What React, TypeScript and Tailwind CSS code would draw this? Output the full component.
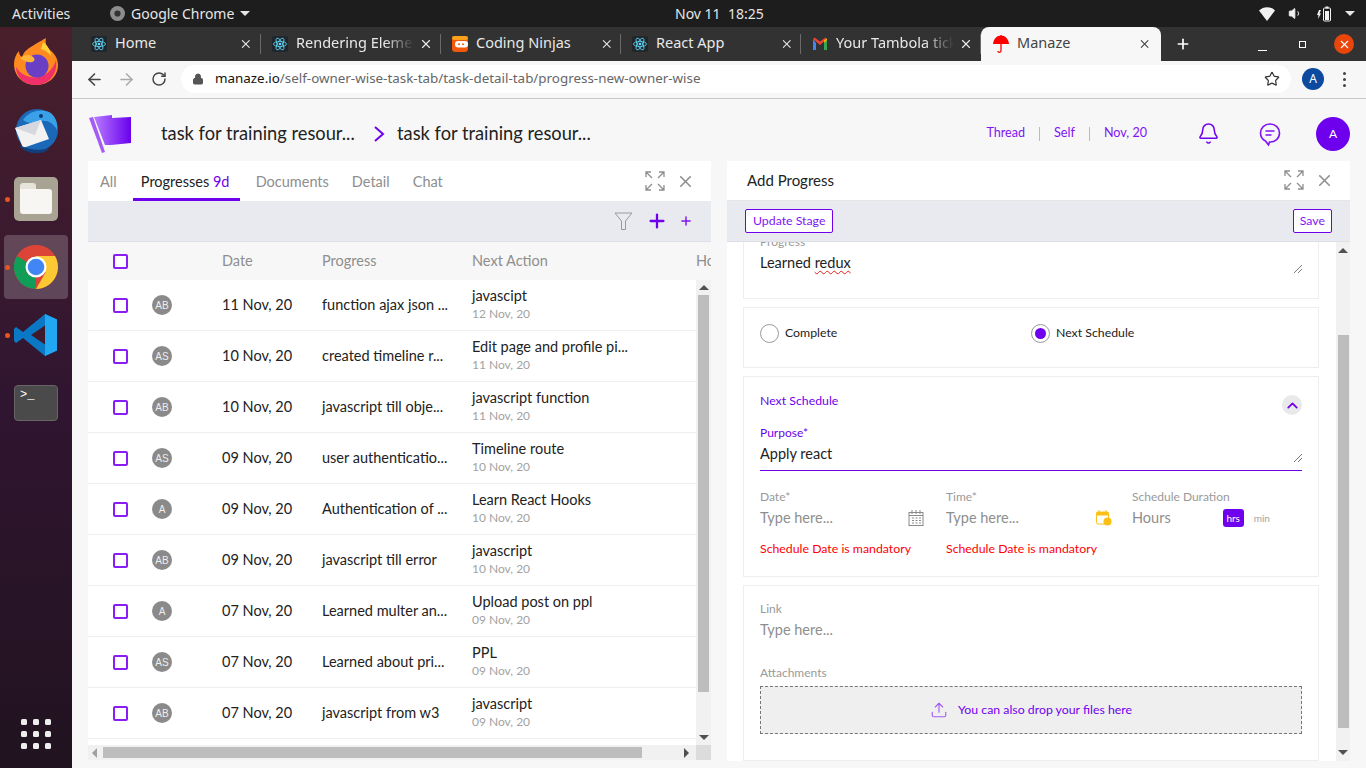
import { ArrowLeft, ArrowRight, Bell, ChevronUp, Lock, Plus, RotateCw, Star, Upload, Volume1, X } from 'lucide-react';

const rows = [
  { who: 'AB', date: '11 Nov, 20', progress: 'function ajax json ...', next: 'javascipt', due: '12 Nov, 20' },
  { who: 'AS', date: '10 Nov, 20', progress: 'created timeline r...', next: 'Edit page and profile pi...', due: '11 Nov, 20' },
  { who: 'AB', date: '10 Nov, 20', progress: 'javascript till obje...', next: 'javascript function', due: '11 Nov, 20' },
  { who: 'AS', date: '09 Nov, 20', progress: 'user authenticatio...', next: 'Timeline route', due: '10 Nov, 20' },
  { who: 'A', date: '09 Nov, 20', progress: 'Authentication of ...', next: 'Learn React Hooks', due: '10 Nov, 20' },
  { who: 'AB', date: '09 Nov, 20', progress: 'javascript till error', next: 'javascript', due: '10 Nov, 20' },
  { who: 'A', date: '07 Nov, 20', progress: 'Learned multer an...', next: 'Upload post on ppl', due: '09 Nov, 20' },
  { who: 'AS', date: '07 Nov, 20', progress: 'Learned about pri...', next: 'PPL', due: '09 Nov, 20' },
  { who: 'AB', date: '07 Nov, 20', progress: 'javascript from w3', next: 'javascript', due: '09 Nov, 20' },
];

function ReactIcon() {
  return (
    <svg width="16" height="16" viewBox="0 0 16 16" className="shrink-0">
      <rect width="16" height="16" rx="2" fill="#20262c" />
      <g fill="none" stroke="#61dafb" strokeWidth="0.8">
        <ellipse cx="8" cy="8" rx="6.5" ry="2.6" />
        <ellipse cx="8" cy="8" rx="6.5" ry="2.6" transform="rotate(60 8 8)" />
        <ellipse cx="8" cy="8" rx="6.5" ry="2.6" transform="rotate(120 8 8)" />
      </g>
      <circle cx="8" cy="8" r="1.3" fill="#61dafb" />
    </svg>
  );
}

function NinjaIcon() {
  return (
    <svg width="16" height="16" viewBox="0 0 16 16" className="shrink-0">
      <rect width="16" height="16" rx="3.5" fill="#f2590f" />
      <rect y="0" width="16" height="4" rx="2" fill="#f9a11b" />
      <rect x="3" y="5" width="13" height="6.5" rx="3" fill="#fff" />
      <circle cx="7" cy="8.2" r="1" fill="#f2590f" />
      <circle cx="11" cy="8.2" r="1" fill="#f2590f" />
    </svg>
  );
}

function GmailIcon() {
  return (
    <svg width="16" height="14" viewBox="0 0 16 14" className="shrink-0">
      <path d="M1 2v11h3V6z" fill="#4285f4" />
      <path d="M15 2v11h-3V6z" fill="#34a853" />
      <path d="M1 2l7 6 7-6-1.5-1.5L8 4.6 2.5.5z" fill="#ea4335" />
      <path d="M12 6l3-3V1.5L12 3.6z" fill="#fbbc04" />
    </svg>
  );
}

function UmbrellaIcon() {
  return (
    <svg width="16" height="20" viewBox="0 0 16 20" className="shrink-0">
      <path d="M0 10C.6 4.5 4 1.5 8 1.5S15.400 4.500 16 10z" fill="#f00" />
      <path d="M8 1v15.500c0 2.500-3 2.500-3 .5" fill="none" stroke="#f00" strokeWidth="1.300" />
    </svg>
  );
}

function Tab({ icon, title, fade, active, wide }: { icon: React.ReactNode; title: string; fade?: boolean; active?: boolean; wide?: boolean }) {
  const pad = wide ? 'w-[189px] pl-[19px]' : active ? 'w-[180px] pl-[12px]' : 'w-[180px] pl-[11px]';
  return (
    <div className={`flex h-full items-center ${pad} ${active ? 'rounded-t-lg bg-[#f7f7f7] text-[#444]' : 'text-[#e8e8e8]'}`}>
      {icon}
      <span className={`ml-[8px] overflow-hidden whitespace-nowrap pb-[2px] text-[14.5px] ${fade ? 'w-[118px] [mask-image:linear-gradient(90deg,#000_75%,transparent)]' : 'w-[128px]'}`}>{title}</span>
      <X size={14} strokeWidth={2} className="ml-auto" />
      {active ? <span className="ml-[9px] w-px" /> : <span className="ml-[7px] h-[20px] w-px bg-[#6a6a6a]" />}
    </div>
  );
}

function TopBar() {
  return (
    <div className="flex h-[27px] items-center bg-[#1d1d1d] pl-[12px] text-[14px] text-[#e6e6e6]">
      <span className="w-[98px]">Activities</span>
      <svg width="15" height="15" viewBox="0 0 16 16">
        <circle cx="8" cy="8" r="8" fill="#8d8d8d" />
        <circle cx="8" cy="8" r="3.300" fill="#333" />
      </svg>
      <span className="ml-[6px] w-[109px]">Google Chrome</span>
      <span className="h-0 w-0 border-x-[5px] border-t-[5px] border-x-transparent border-t-[#e6e6e6]" />
      <span className="ml-[425px] w-[92px] whitespace-pre">Nov 11  18:25</span>
      <div className="ml-auto flex items-center gap-[13px] pr-[11px]">
        <svg width="16" height="14" viewBox="0 0 16 14"><path d="M0 3.500C4.500-1 11.500-1 16 3.500L8 14z" fill="#f2f2f2" /></svg>
        <Volume1 size={15} fill="#f2f2f2" strokeWidth={1.500} />
        <svg width="16" height="16" viewBox="0 0 16 16">
          <rect x="7.500" y="2" width="7" height="13" rx="1" fill="none" stroke="#f2f2f2" />
          <rect x="9.500" y="0.500" width="3" height="2" fill="#f2f2f2" />
          <rect x="9" y="5" width="4" height="9" fill="#f2f2f2" />
          <path d="M3 4L1 9h1.500L2 13l3-5.500H3.500L5 4z" fill="#f2f2f2" />
        </svg>
        <span className="h-0 w-0 border-x-[5px] border-t-[5px] border-x-transparent border-t-[#e6e6e6]" />
      </div>
    </div>
  );
}

function Dock() {
  return (
    <div className="flex h-full w-[72px] shrink-0 flex-col items-center bg-gradient-to-b from-[#4a1f2c] via-[#301530] to-[#211320] pt-[11px]">
      <svg width="46" height="48" viewBox="0 0 46 48">
        <path d="M23 47C10 47 1 38 1 26c0-5 2-10 5-13 0 3 1 5 3 6 2-6 7-9 12-12 7-4 10-6 12-7-1 4 0 8 4 12 5 4 8 9 8 15 0 11-9 20-22 20z" fill="#ff8a1f" />
        <path d="M23 47C11 47 3 39 3 29c6 10 20 14 30 7 6-4 9-10 10-14 2 14-7 25-20 25z" fill="#f0306a" />
        <circle cx="24" cy="28" r="11.500" fill="#6a3fc4" />
        <path d="M7 20c5-4 11-4 14 0 2 3-2 5-6 4-3-1-6-2-8-4z" fill="#ffb53a" />
        <path d="M30 4c5 4 8 9 8 14-3-4-6-6-10-7z" fill="#ffd23a" />
      </svg>
      <svg width="46" height="48" viewBox="0 0 46 48" className="mt-[21px]">
        <circle cx="24" cy="23" r="21" fill="#1b68b8" />
        <path d="M10 13C15 5 26 1 36 5c6 3 9 10 8 18-4-8-12-11-20-8-6 2-10 1-14-2z" fill="#3aa0e8" />
        <circle cx="28" cy="9" r="2" fill="#0d3c78" />
        <path d="M2 21l26-8 8 19-26 9z" fill="#f2f2f2" />
        <path d="M2 21l20 7 6-15z" fill="#d7d7e0" />
        <path d="M6 38c4 6 12 9 20 8 4 0 8-2 11-5-9 3-21 2-31-3z" fill="#123f7c" />
      </svg>
      <div className="relative mt-[22px] h-[44px] w-[44px] rounded-[5px] bg-[#a8a392] p-[6px]">
        <span className="absolute left-[-9px] top-[20px] h-[5px] w-[5px] rounded-full bg-[#e95420]" />
        <div className="h-[6px] w-[16px] rounded-t-[3px] bg-[#e6e3d8]" />
        <div className="h-[25px] rounded-b-[3px] rounded-tr-[3px] bg-[#f7f6f2]" />
      </div>
      <div className="relative mt-[14px] flex h-[64px] w-[64px] items-center justify-center rounded-[4px] bg-white/20">
        <span className="absolute left-[1px] top-[30px] h-[5px] w-[5px] rounded-full bg-[#e95420]" />
        <svg width="44" height="44" viewBox="0 0 44 44">
          <circle cx="22" cy="22" r="22" fill="#db4437" />
          <path d="M22 22L3 33A22 22 0 0 0 22 44z" fill="#0f9d58" />
          <path d="M3 33A22 22 0 0 1 3 11L22 22z" fill="#0f9d58" />
          <path d="M22 22L3 11A22 22 0 0 1 22 0h0A22 22 0 0 1 41 11z" fill="#db4437" />
          <path d="M22 11H41A22 22 0 0 1 22 44L31.500 27.500z" fill="#fcc934" />
          <circle cx="22" cy="22" r="10.500" fill="#fff" />
          <circle cx="22" cy="22" r="8.300" fill="#4285f4" />
        </svg>
      </div>
      <div className="relative mt-[15px] h-[42px] w-[44px]">
        <span className="absolute left-[-9px] top-[19px] h-[5px] w-[5px] rounded-full bg-[#e95420]" />
        <svg width="44" height="42" viewBox="0 0 44 42">
          <path d="M31 0l12 5.500v31L31 42 9 24 2 29l-2-2v-12l2-2 7 5z" fill="#0a78c4" />
          <path d="M31 0l12 5.500v31L31 42z" fill="#22a7f2" />
          <path d="M31 11.500L17 21l14 9.500z" fill="#3f1a2c" />
        </svg>
      </div>
      <div className="mt-[29px] h-[36px] w-[44px] rounded-[4px] border border-[#666] bg-[#4a4a4a] pl-[5px] font-['Liberation_Mono',monospace] text-[12px] leading-[18px] text-white">
        &gt;_
      </div>
      <div className="mb-[19px] mt-auto grid grid-cols-3 gap-[6px]">
        {Array.from({ length: 9 }).map((_, i) => (
          <span key={i} className="h-[6px] w-[6px] rounded-[1.500px] bg-[#eee]" />
        ))}
      </div>
    </div>
  );
}

function Chrome() {
  return (
    <div className="font-['Noto_Sans',sans-serif]">
      <div className="flex h-[34px] items-end bg-[#333232]">
        <Tab icon={<ReactIcon />} title="Home" wide />
        <Tab icon={<ReactIcon />} title="Rendering Elements" fade />
        <Tab icon={<NinjaIcon />} title="Coding Ninjas" />
        <Tab icon={<ReactIcon />} title="React App" />
        <Tab icon={<GmailIcon />} title="Your Tambola tickets" fade />
        <Tab icon={<UmbrellaIcon />} title="Manaze" active />
        <Plus size={16} strokeWidth={2.500} className="mb-[9px] ml-[14px] text-white" />
        <span className="mb-[10px] ml-[67px] h-[1px] w-[9px] bg-white" />
        <span className="mb-[13px] ml-[32px] h-[7px] w-[7px] border border-white" />
        <span className="mb-[7px] ml-[28px] flex h-[20px] w-[20px] items-center justify-center rounded-full bg-[#e9460c] text-white">
          <X size={13} strokeWidth={2} />
        </span>
      </div>
      <div className="flex h-[38px] items-center border-b border-[#c9c9c9] bg-[#f7f7f7] pb-[1px]">
        <ArrowLeft size={19} strokeWidth={2} className="ml-[13px] text-[#444]" />
        <ArrowRight size={19} strokeWidth={2} className="ml-[13px] text-[#aaa]" />
        <RotateCw size={16} strokeWidth={2.200} className="ml-[15px] text-[#444]" />
        <div className="ml-[14px] flex h-[28px] w-[1110px] items-center rounded-full bg-white pl-[11px] pr-[11px] text-[13.4px]">
          <Lock size={12} fill="#555" strokeWidth={2} className="text-[#555]" />
          <span className="ml-[11px] pb-[1px] text-[#111]">manaze.io</span>
          <span className="pb-[1px] text-[#666]">/self-owner-wise-task-tab/task-detail-tab/progress-new-owner-wise</span>
          <Star size={16} strokeWidth={1.800} className="ml-auto text-[#333]" />
        </div>
        <span className="ml-[11px] flex h-[22px] w-[22px] items-center justify-center rounded-full bg-[#0b4a9e] text-[12px] text-white">A</span>
        <div className="ml-[19px] flex flex-col gap-[3px]">
          <span className="h-[3px] w-[3px] rounded-full bg-[#444]" />
          <span className="h-[3px] w-[3px] rounded-full bg-[#444]" />
          <span className="h-[3px] w-[3px] rounded-full bg-[#444]" />
        </div>
      </div>
    </div>
  );
}

function Expand() {
  return (
    <svg width="20" height="20" viewBox="0 0 20 20" fill="none" stroke="#8f8f8f" strokeWidth="1.300">
      <path d="M1 6V1h5M1 1l6 6M14 1h5v5M19 1l-6 6M1 14v5h5M1 19l6-6M14 19h5v-5M19 19l-6-6" />
    </svg>
  );
}

function CheckBox() {
  return <span className="block h-[15px] w-[15px] rounded-[2px] border-2 border-[#8a1cf5] bg-white" />;
}

function UpArrow() {
  return <span className="block h-0 w-0 shrink-0 border-x-[5px] border-b-[5px] border-x-transparent border-b-[#505050]" />;
}

function DownArrow({ className }: { className: string }) {
  return <span className={`block h-0 w-0 shrink-0 border-x-[5px] border-t-[5px] border-x-transparent border-t-[#505050] ${className}`} />;
}

function ProgressList() {
  return (
    <section className="flex w-[623px] shrink-0 flex-col overflow-hidden">
      <div className="flex h-[40px] items-stretch bg-white text-[14.5px] text-[#8e8e8e]">
        <span className="ml-[12px] flex items-center pt-[2px]">All</span>
        <span className="ml-[16px] flex w-[107px] items-center justify-center border-b-[3px] border-[#6f00ee] pr-[2px] pt-[5px] text-[#222]">
          Progresses&nbsp;<span className="text-[#6f00ee]">9d</span>
        </span>
        <span className="ml-[16px] flex items-center pt-[2px]">Documents</span>
        <span className="ml-[23px] flex items-center pt-[2px]">Detail</span>
        <span className="ml-[23px] flex items-center pt-[2px]">Chat</span>
        <div className="ml-auto flex items-center gap-[11px] pr-[16px]">
          <Expand />
          <X size={19} strokeWidth={2} />
        </div>
      </div>
      <div className="flex h-[41px] items-center justify-end border-b border-[#dcdfe5] bg-[#e8eaef] pr-[18px]">
        <svg width="19" height="19" viewBox="0 0 19 19" fill="none" stroke="#9a9a9a" strokeWidth="1">
          <path d="M1 1h17l-6.500 8v8.500h-4V9z" />
        </svg>
        <Plus size={22} strokeWidth={2.500} className="ml-[13px] text-[#6f00ee]" />
        <Plus size={14} strokeWidth={2.500} className="ml-[11px] text-[#7c14f5]" />
      </div>
      <div className="flex h-[38px] shrink-0 items-center whitespace-nowrap bg-[#f7f7f7] text-[14.5px] text-[#8e8e8e]">
        <div className="w-[64px] shrink-0 pl-[25px]"><CheckBox /></div>
        <div className="w-[70px] shrink-0" />
        <div className="w-[100px] shrink-0">Date</div>
        <div className="w-[150px] shrink-0">Progress</div>
        <div className="w-[224px] shrink-0">Next Action</div>
        <div className="shrink-0">Hours</div>
      </div>
      <div className="flex h-[465px]">
        <div className="w-[608px] bg-white">
          {rows.map((r, i) => (
            <div key={i} className="flex h-[51px] items-center border-b border-[#eeeeee] text-[14.5px] text-[#222]">
              <div className="w-[64px] pl-[25px]"><CheckBox /></div>
              <div className="w-[70px]">
                <span className="flex h-[20px] w-[20px] items-center justify-center rounded-full bg-[#8a8a8a] font-['Liberation_Sans',sans-serif] text-[10px] text-[#eee]">{r.who}</span>
              </div>
              <div className="w-[100px] pb-[1px]">{r.date}</div>
              <div className="w-[150px] whitespace-nowrap pb-[1px]">{r.progress}</div>
              <div className="w-[224px] whitespace-nowrap">
                <div className="leading-[18px]">{r.next}</div>
                <div className="text-[12px] leading-[18px] text-[#a2a2a2]">{r.due}</div>
              </div>
            </div>
          ))}
        </div>
        <div className="flex w-[15px] flex-col items-center bg-[#f1f1f1] pt-[5px]">
          <UpArrow />
          <div className="mt-[5px] h-[397px] w-[11px] shrink-0 bg-[#bdbdbd]" />
          <DownArrow className="mt-[43px]" />
        </div>
      </div>
      <div className="flex h-[15px] items-center bg-[#f1f1f1]">
        <span className="ml-[4px] h-0 w-0 border-y-[5px] border-r-[5px] border-y-transparent border-r-[#a0a0a0]" />
        <div className="ml-[6px] h-[11px] w-[539px] bg-[#bdbdbd]" />
        <span className="ml-[42px] h-0 w-0 border-y-[5px] border-l-[5px] border-y-transparent border-l-[#505050]" />
        <div className="ml-auto h-[15px] w-[15px] bg-[#dcdcdc]" />
      </div>
    </section>
  );
}

function Card({ className, children }: { className: string; children: React.ReactNode }) {
  return <div className={`mb-[8px] border border-[#eeeeee] bg-white px-[16px] ${className}`}>{children}</div>;
}

function Grip() {
  return (
    <svg width="8" height="8" viewBox="0 0 8 8" stroke="#555" strokeWidth="0.800" className="ml-auto">
      <path d="M0 8L8 0M4 8L8 4" />
    </svg>
  );
}

function Field({ label, width, children }: { label: string; width: string; children: React.ReactNode }) {
  return (
    <div className={width}>
      <div className="text-[12px] leading-[16px] text-[#9a9a9a]">{label}</div>
      <div className="flex h-[24px] items-center pt-[2px] text-[14.5px] text-[#8e8e8e]">{children}</div>
    </div>
  );
}

function AddProgress() {
  return (
    <section className="ml-[16px] flex w-[623px] shrink-0 flex-col overflow-hidden">
      <div className="flex h-[40px] items-center border-b border-[#e6e6e6] bg-white pb-[1px] pl-[20px] pr-[16px] text-[15px] text-[#222]">
        Add Progress
        <div className="ml-auto flex items-center gap-[11px] text-[#8e8e8e]">
          <Expand />
          <X size={19} strokeWidth={2} />
        </div>
      </div>
      <div className="flex h-[41px] items-center justify-between border-b border-[#dcdfe5] bg-[#e8eaef] pl-[18px] pr-[18px] text-[12.3px] text-[#7f14f5]">
        <span className="rounded-[2px] border border-[#6f00ee] bg-white px-[7px] py-[2px]">Update Stage</span>
        <span className="rounded-[2px] border border-[#6f00ee] bg-white px-[6px] py-[2px]">Save</span>
      </div>
      <div className="flex h-[519px] overflow-hidden bg-white">
        <div className="w-[609px] overflow-hidden pl-[16px] pr-[17px] text-[#222]">
          <Card className="-mt-[7px] h-[64px] border-t-0">
            <div className="text-[12px] leading-[14px] text-[#9a9a9a]">Progress</div>
            <div className="mt-[4px] flex items-end text-[14.5px] leading-[20px]">
              <span>Learned <span className="underline decoration-[#e02020] decoration-wavy decoration-1 underline-offset-2">redux</span></span>
              <span className="mb-0 ml-auto"><Grip /></span>
            </div>
          </Card>
          <Card className="flex h-[61px] items-center pb-[8px] text-[12.3px]">
            <span className="h-[19px] w-[19px] rounded-full border border-[#999]" />
            <span className="ml-[6px] w-[246px]">Complete</span>
            <span className="flex h-[19px] w-[19px] items-center justify-center rounded-full border border-[#999]">
              <span className="h-[11px] w-[11px] rounded-full bg-[#6f00ee]" />
            </span>
            <span className="ml-[6px]">Next Schedule</span>
          </Card>
          <Card className="h-[201px]">
            <div className="flex h-[48px] items-center justify-between pt-[8px] text-[12.3px] text-[#6f00ee]">
              <span className="-mt-[8px]">Next Schedule</span>
              <span className="flex h-[20px] w-[20px] items-center justify-center rounded-full bg-[#e9e9e9]">
                <ChevronUp size={17} strokeWidth={2.500} />
              </span>
            </div>
            <div className="text-[12px] leading-[16px] text-[#6f00ee]">Purpose*</div>
            <div className="flex h-[30px] items-center border-b border-b-[#6f00ee] pb-[3px] text-[14.5px] text-[#222]">
              Apply react
              <span className="ml-auto mt-[8px]"><Grip /></span>
            </div>
            <div className="mt-[18px] flex">
              <Field label="Date*" width="w-[186px]">
                Type here...
                <svg width="16" height="16" viewBox="0 0 16 16" fill="none" stroke="#8a8a8a" className="ml-auto mr-[22px]">
                  <rect x="1" y="2.500" width="14" height="13" />
                  <path d="M4 0v4M8 0v4M12 0v4M1 5.500h14M4 8h2M7.500 8h2M11 8h2M4 10.500h2M7.500 10.500h2M11 10.500h2M4 13h2M7.500 13h2M11 13h2" />
                </svg>
              </Field>
              <Field label="Time*" width="w-[186px]">
                Type here...
                <svg width="16" height="16" viewBox="0 0 16 16" className="ml-auto mr-[20px]">
                  <rect x="0.500" y="2" width="12" height="12" rx="1.500" fill="#fff" stroke="#fcbf15" />
                  <rect x="0.500" y="2" width="12" height="3.500" fill="#fcbf15" />
                  <path d="M3 0v3M10 0v3" stroke="#fcbf15" />
                  <circle cx="11.500" cy="11.500" r="4" fill="#fcbf15" />
                </svg>
              </Field>
              <Field label="Schedule Duration" width="w-[170px]">
                Hours
                <span className="ml-[52px] flex h-[18px] w-[21px] items-center justify-center rounded-[3px] bg-[#6f00ee] text-[10px] text-white">hrs</span>
                <span className="ml-[10px] text-[10px] text-[#a2a2a2]">min</span>
              </Field>
            </div>
            <div className="mt-[12px] flex text-[12.3px] leading-[16px] text-[#f00]">
              <span className="w-[186px]">Schedule Date is mandatory</span>
              <span>Schedule Date is mandatory</span>
            </div>
          </Card>
          <Card className="h-[176px] pt-[15px]">
            <Field label="Link" width="w-full">Type here...</Field>
            <div className="mt-[24px] text-[12px] leading-[16px] text-[#9a9a9a]">Attachments</div>
            <div className="mt-[5px] flex h-[48px] items-center justify-center border border-dashed border-[#777] bg-[#efefef] text-[12.3px] text-[#6f00ee]">
              <Upload size={18} strokeWidth={1.500} className="text-[#a45cf5]" />
              <span className="ml-[10px]">You can also drop your files here</span>
            </div>
          </Card>
        </div>
        <div className="flex w-[14px] flex-col items-center bg-[#f1f1f1] pt-[6px]">
          <UpArrow />
          <div className="mt-[82px] h-[393px] w-[11px] shrink-0 bg-[#bdbdbd]" />
          <DownArrow className="mt-[22px]" />
        </div>
      </div>
    </section>
  );
}

export default function App() {
  return (
    <div className="flex h-[768px] w-[1366px] flex-col overflow-hidden bg-[#f7f7f7] font-['Noto_Sans',sans-serif]">
      <TopBar />
      <div className="flex min-h-0 flex-1">
        <Dock />
        <main className="min-w-0 flex-1">
          <Chrome />
          <div className="font-[Lato,sans-serif]">
            <header className="flex h-[62px] items-center pl-[17px] pr-[16px] pt-[7px]">
              <svg width="42" height="38" viewBox="0 0 42 38">
                <defs>
                  <linearGradient id="flag" x1="0" x2="1" y1="0" y2="0">
                    <stop offset="0" stopColor="#b77bff" />
                    <stop offset="1" stopColor="#6a00ee" />
                  </linearGradient>
                </defs>
                <path d="M0 3l4-1 12 35-3 1z" fill="#a45cf5" />
                <path d="M5 2l18-2v3l19-1v26l-20 2-6 0z" fill="url(#flag)" />
              </svg>
              <span className="ml-[30px] w-[212px] whitespace-nowrap text-[18.3px] text-[#222]">task for training resour...</span>
              <svg width="12" height="16" viewBox="0 0 12 16" fill="none" stroke="#6f00ee" strokeWidth="2"><path d="M2 1l8 7-8 7" /></svg>
              <span className="ml-[12px] whitespace-nowrap text-[18.3px] text-[#222]">task for training resour...</span>
              <div className="ml-auto flex items-center text-[12.6px] text-[#7f14f5]">
                <span>Thread</span>
                <span className="mx-[14px] h-[14px] w-px bg-[#bbb]" />
                <span>Self</span>
                <span className="mx-[14px] h-[14px] w-px bg-[#bbb]" />
                <span>Nov, 20</span>
                <Bell size={23} strokeWidth={1.600} className="ml-[50px] text-[#6f00ee]" />
                <svg width="22" height="24" viewBox="0 0 22 24" fill="none" stroke="#7f14f5" strokeWidth="1.600" className="ml-[39px]">
                  <path d="M11 2c5.500 0 9.500 3.800 9.500 9 0 5.500-4.500 9-9.500 9h-.5l-1 3-3-4C3.500 17.500 1.500 14.500 1.500 11 1.500 5.800 5.500 2 11 2z" />
                  <path d="M6.500 9h9M6.500 13h6" />
                </svg>
                <span className="ml-[35px] flex h-[34px] w-[34px] items-center justify-center rounded-full bg-[#6f00ee] text-[12px] text-white">A</span>
              </div>
            </header>
            <div className="flex pl-[16px]">
              <ProgressList />
              <AddProgress />
            </div>
          </div>
        </main>
      </div>
    </div>
  );
}
